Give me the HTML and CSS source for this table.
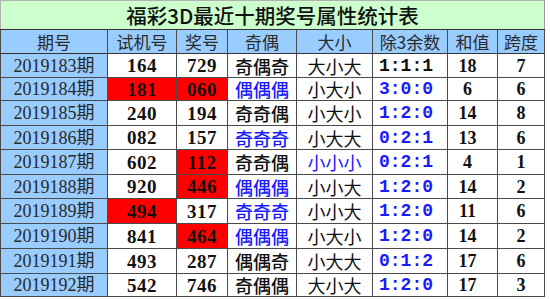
FILE: index.html
```html
<!DOCTYPE html>
<html>
<head>
<meta charset="utf-8">
<link rel="stylesheet" href="styles.css">
</head>
<body>
<table class="stats">
  <colgroup>
    <col class="c-qh"><col class="c-sj"><col class="c-jh"><col class="c-jo">
    <col class="c-dx"><col class="c-ys"><col class="c-hz"><col class="c-kd">
  </colgroup>
  <tr class="title"><td colspan="8">福彩3D最近十期奖号属性统计表</td></tr>
  <tr class="head">
    <th>期号</th><th>试机号</th><th>奖号</th><th>奇偶</th><th>大小</th><th>除3余数</th><th>和值</th><th>跨度</th>
  </tr>
  <tr class="h23"><td class="qh">2019183期</td><td class="num">164</td><td class="num">729</td><td class="jo">奇偶奇</td><td class="dx">大小大</td><td class="ys">1:1:1</td><td class="hz">18</td><td class="kd">7</td></tr>
  <tr class="h22"><td class="qh">2019184期</td><td class="num red">181</td><td class="num red">060</td><td class="jo blue">偶偶偶</td><td class="dx">小大小</td><td class="ys blue">3:0:0</td><td class="hz">6</td><td class="kd">6</td></tr>
  <tr class="h24"><td class="qh">2019185期</td><td class="num">240</td><td class="num">194</td><td class="jo">奇奇偶</td><td class="dx">小大小</td><td class="ys blue">1:2:0</td><td class="hz">14</td><td class="kd">8</td></tr>
  <tr class="h23"><td class="qh">2019186期</td><td class="num">082</td><td class="num">157</td><td class="jo blue">奇奇奇</td><td class="dx">小大大</td><td class="ys blue">0:2:1</td><td class="hz">13</td><td class="kd">6</td></tr>
  <tr class="h24"><td class="qh">2019187期</td><td class="num">602</td><td class="num red">112</td><td class="jo">奇奇偶</td><td class="dx blue">小小小</td><td class="ys blue">0:2:1</td><td class="hz">4</td><td class="kd">1</td></tr>
  <tr class="h23"><td class="qh">2019188期</td><td class="num">920</td><td class="num red">446</td><td class="jo blue">偶偶偶</td><td class="dx">小小大</td><td class="ys blue">1:2:0</td><td class="hz">14</td><td class="kd">2</td></tr>
  <tr class="h24"><td class="qh">2019189期</td><td class="num red">494</td><td class="num">317</td><td class="jo blue">奇奇奇</td><td class="dx">小小大</td><td class="ys blue">1:2:0</td><td class="hz">11</td><td class="kd">6</td></tr>
  <tr class="h24"><td class="qh">2019190期</td><td class="num">841</td><td class="num red">464</td><td class="jo blue">偶偶偶</td><td class="dx">小大小</td><td class="ys blue">1:2:0</td><td class="hz">14</td><td class="kd">2</td></tr>
  <tr class="h24"><td class="qh">2019191期</td><td class="num">493</td><td class="num">287</td><td class="jo">偶偶奇</td><td class="dx">小大大</td><td class="ys blue">0:1:2</td><td class="hz">17</td><td class="kd">6</td></tr>
  <tr class="h22"><td class="qh">2019192期</td><td class="num">542</td><td class="num">746</td><td class="jo">奇偶偶</td><td class="dx">大小大</td><td class="ys blue">1:2:0</td><td class="hz">17</td><td class="kd">3</td></tr>
</table>
</body>
</html>
```
FILE: styles.css
```css
html, body {
  margin: 0;
  padding: 0;
  background: #ffffff;
}
body {
  font-family: "Liberation Serif", "Noto Sans CJK SC", serif;
  color: #111;
}
.stats {
  border-collapse: collapse;
  table-layout: fixed;
  width: 545px;
}
.c-qh { width: 107px; }
.c-sj { width: 69px; }
.c-jh { width: 51px; }
.c-jo { width: 69px; }
.c-dx { width: 76px; }
.c-ys { width: 75px; }
.c-hz { width: 50px; }
.c-kd { width: 47px; }

.stats td, .stats th {
  border: 1px solid #4a4a4a;
  padding: 0;
  text-align: center;
  white-space: nowrap;
  overflow: hidden;
  line-height: 1;
}
.stats tr.h22 td { height: 22px; }
.stats tr.h23 td { height: 23px; }
.stats tr.h24 td { height: 24px; }

.title td {
  background: #ccffcc;
  border-top: 1px solid #b0b0b0;
  border-left: 1px solid #b0b0b0;
  border-right: 1px solid #9a9a9a;
  border-bottom: 1px solid #333;
  height: 27px;
  font-family: "Noto Sans CJK SC", sans-serif;
  font-size: 20.5px;
  font-weight: 500;
  color: #111;
  padding-top: 1px;
}
.head th {
  background: #99ccff;
  height: 23px;
  font-family: "Noto Sans CJK SC", sans-serif;
  font-weight: 400;
  font-size: 17px;
  color: #2a2a2a;
  border-bottom: 1px solid #333;
}
.qh {
  background: #99ccff;
  font-family: "Liberation Serif", "Noto Sans CJK SC", serif;
  font-size: 18px;
  color: #2a2a2a;
}
.num {
  font-family: "Liberation Serif", serif;
  font-weight: 700;
  font-size: 19px;
  letter-spacing: 0.5px;
}
.red { background: #ff0000; }
.jo {
  font-family: "Noto Sans CJK SC", sans-serif;
  font-weight: 500;
  font-size: 18px;
}
.dx {
  font-family: "Noto Sans CJK SC", sans-serif;
  font-weight: 400;
  font-size: 18px;
}
.ys {
  font-family: "Liberation Mono", monospace;
  font-weight: 700;
  font-size: 18px;
  padding-right: 8px !important;
}
.hz {
  font-family: "Liberation Serif", serif;
  font-weight: 700;
  font-size: 18px;
  padding-right: 10px !important;
}
.kd {
  font-family: "Liberation Serif", serif;
  font-weight: 700;
  font-size: 18px;
}
.blue { color: #1a1aff; }
```
